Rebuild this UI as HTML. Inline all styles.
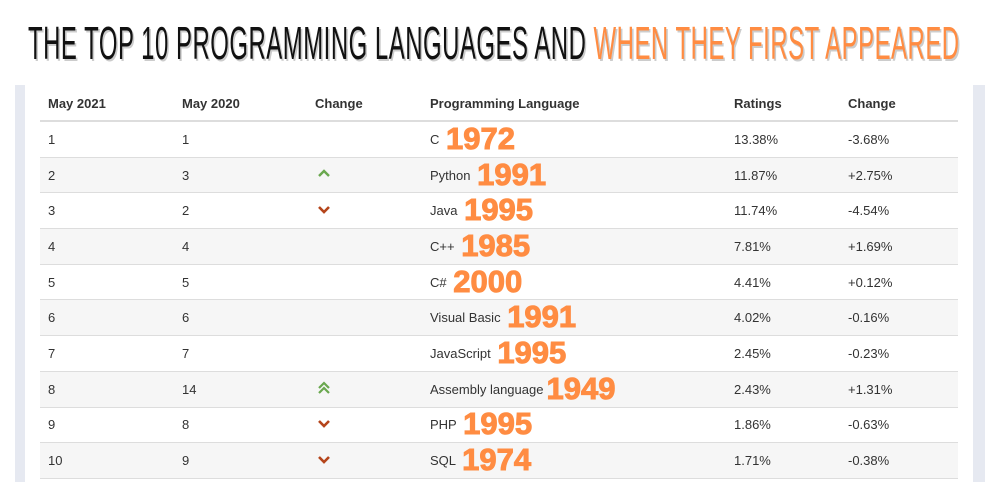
<!DOCTYPE html>
<html><head><style>
body{margin:0;width:1000px;height:500px;background:#fff;position:relative;overflow:hidden;font-family:"Liberation Sans",Arial,sans-serif;}
.title{position:absolute;left:28px;top:16px;white-space:nowrap;font-family:"Liberation Sans Narrow","Liberation Sans",sans-serif;font-size:46px;letter-spacing:1px;color:#111;transform:scaleX(0.52);transform-origin:0 0;text-shadow:3px 2px 0 #ccc;}
.title .o{color:#ff8c42}
.sb{position:absolute;top:85px;height:397px;background:#e6e9f1}
table{position:absolute;left:40px;top:86px;width:918px;border-collapse:collapse;font-size:13px;color:#333}
th{text-align:left;font-weight:bold;height:34px;border-bottom:2px solid #ddd;padding:0 0 0 8px;color:#333}
td{height:34.7px;padding:0 0 0 8px;border-bottom:1px solid #ddd;white-space:nowrap}
tr:nth-child(odd) td{background:#f6f6f6}
.y{color:#ff8c42;font-weight:900;font-size:31px;line-height:0;vertical-align:-5px;letter-spacing:0;margin-left:3px;-webkit-text-stroke:1px #ff8c42}
.ar{padding-left:9px}
</style></head><body>
<div class="title">THE TOP 10 PROGRAMMING LANGUAGES AND <span class="o">WHEN THEY FIRST APPEARED</span></div>
<div class="sb" style="left:15px;width:10px"></div>
<div class="sb" style="left:973px;width:12px"></div>
<table>
<tr><th style="width:126px">May 2021</th><th style="width:125px">May 2020</th><th style="width:107px">Change</th><th style="width:296px">Programming Language</th><th style="width:106px">Ratings</th><th>Change</th></tr>
<tr><td>1</td><td>1</td><td></td><td>C <span class="y">1972</span></td><td>13.38%</td><td>-3.68%</td></tr>
<tr><td>2</td><td>3</td><td class="ar"><svg width="16" height="12"><path d="M3 8l5-5 5 5" stroke="#6aa84f" stroke-width="2.4" fill="none"/></svg></td><td>Python <span class="y">1991</span></td><td>11.87%</td><td>+2.75%</td></tr>
<tr><td>3</td><td>2</td><td class="ar"><svg width="16" height="12"><path d="M3 4l5 5 5-5" stroke="#b5451b" stroke-width="2.6" fill="none"/></svg></td><td>Java <span class="y">1995</span></td><td>11.74%</td><td>-4.54%</td></tr>
<tr><td>4</td><td>4</td><td></td><td>C++ <span class="y">1985</span></td><td>7.81%</td><td>+1.69%</td></tr>
<tr><td>5</td><td>5</td><td></td><td>C# <span class="y">2000</span></td><td>4.41%</td><td>+0.12%</td></tr>
<tr><td>6</td><td>6</td><td></td><td>Visual Basic <span class="y">1991</span></td><td>4.02%</td><td>-0.16%</td></tr>
<tr><td>7</td><td>7</td><td></td><td>JavaScript <span class="y">1995</span></td><td>2.45%</td><td>-0.23%</td></tr>
<tr><td>8</td><td>14</td><td class="ar"><svg width="16" height="16"><path d="M3 8l5-5 5 5M3 13l5-5 5 5" stroke="#6aa84f" stroke-width="2.2" fill="none"/></svg></td><td>Assembly language<span class="y">1949</span></td><td>2.43%</td><td>+1.31%</td></tr>
<tr><td>9</td><td>8</td><td class="ar"><svg width="16" height="12"><path d="M3 4l5 5 5-5" stroke="#b5451b" stroke-width="2.6" fill="none"/></svg></td><td>PHP <span class="y">1995</span></td><td>1.86%</td><td>-0.63%</td></tr>
<tr><td>10</td><td>9</td><td class="ar"><svg width="16" height="12"><path d="M3 4l5 5 5-5" stroke="#b5451b" stroke-width="2.6" fill="none"/></svg></td><td>SQL <span class="y">1974</span></td><td>1.71%</td><td>-0.38%</td></tr>
</table>
</body></html>
